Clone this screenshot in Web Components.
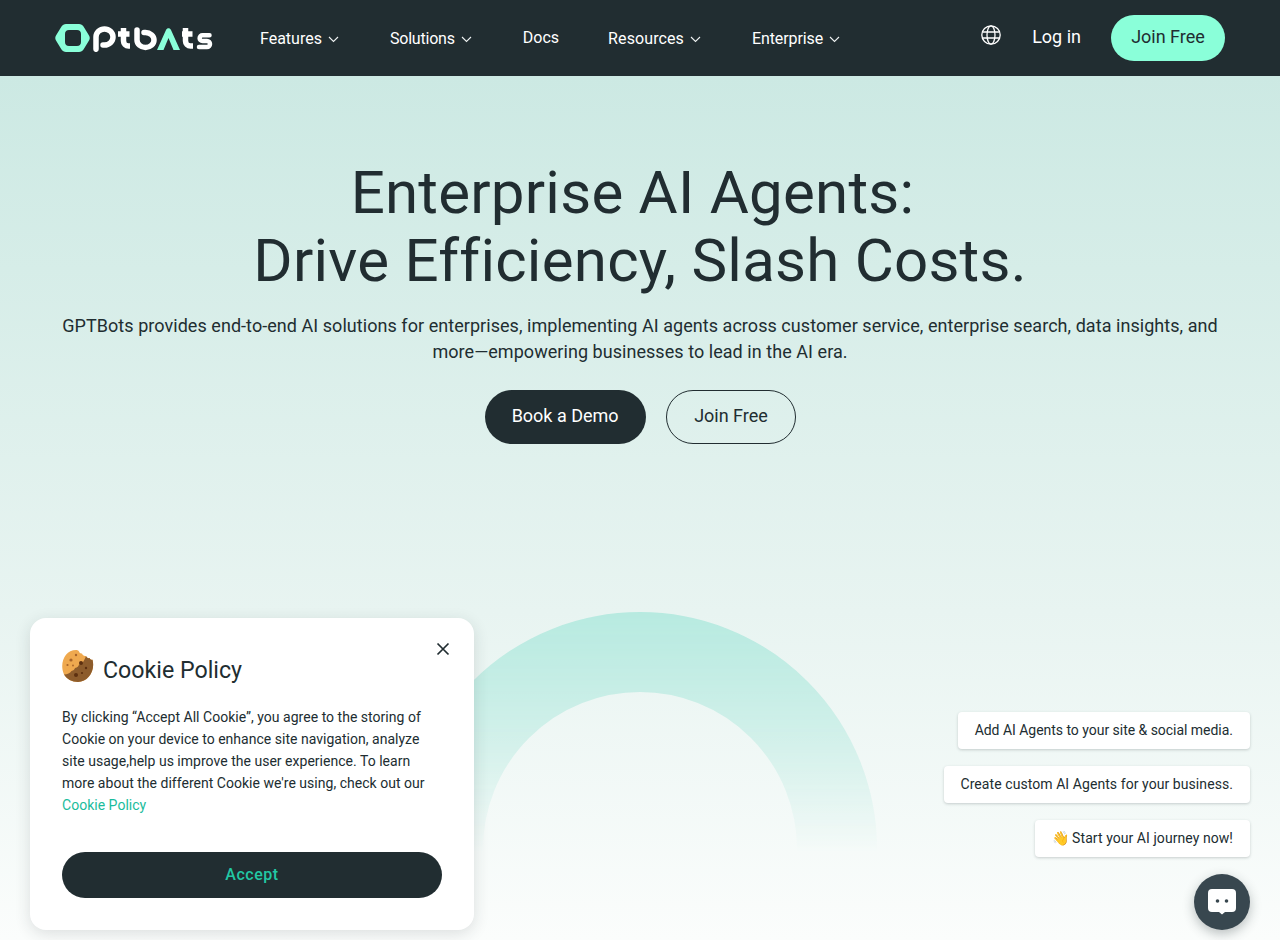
<!DOCTYPE html>
<html lang="en"><head><meta charset="utf-8"><title>GPTBots</title>
<style>
html,body{margin:0;height:940px;overflow:hidden;font-family:Roboto,"Liberation Sans",sans-serif}
body{position:relative;background:#fff}
</style></head><body>
<gb-header></gb-header>
<gb-hero></gb-hero>
<gb-cookie></gb-cookie>
<gb-chat></gb-chat>
<script>
const el=(name,html)=>customElements.define(name,class extends HTMLElement{constructor(){super();this.attachShadow({mode:'open'}).innerHTML=html}});
const chev='<svg width="11" height="7" viewBox="0 0 11 7" fill="none" stroke="currentColor" stroke-width="1.100"><path d="M1 1l4.500 4.500L10 1"/></svg>';
el('gb-nav-item',`<style>:host{display:inline-flex;align-items:center;gap:6px;font-size:16px;color:#fff;line-height:20px;height:20px}
svg{display:block;margin-top:1px;color:#eef2f2}</style><slot></slot>${chev}`);
el('gb-header',`<style>:host{display:flex;align-items:center;box-sizing:border-box;height:76px;background:#212d31;padding:0 55px;color:#fff;position:relative;z-index:2}
.logo{display:block;width:158px;height:28px;flex:none}
nav{display:flex;align-items:center;margin-left:47px;font-size:16px}
.docs{font-size:16px;margin-left:51px;line-height:20px}
gb-nav-item{margin-top:1px}
.r{margin-left:auto;display:flex;align-items:center}
.login{font-size:18px;margin-left:31px;margin-top:-3px}
.join{margin-left:30px;width:114px;height:46px;border-radius:23px;background:#8affd9;color:#212d31;font-size:18px;line-height:20px;padding-bottom:2px;box-sizing:border-box;display:flex;align-items:center;justify-content:center}
.globe{display:block;margin-top:-7px}
</style>
<svg class="logo" viewBox="0 0 158 28" role="img" aria-label="GPTBots">
<path fill="#8affd9" fill-rule="evenodd" d="M11 0H24c2 0 3.500 1 4.500 2.500L34 11.500c1 1.500 1 3.500 0 5L28.500 25.500c-1 1.500-2.500 2.500-4.500 2.500H11c-2 0-3.500-1-4.500-2.500L1 16.500c-1-1.500-1-3.500 0-5L6.500 2.500C7.500 1 9 0 11 0zM14 6c-2.500 0-4 1.500-4 4v8c0 2.500 1.500 4 4 4h8c2.500 0 4-1.500 4-4v-8c0-2.500-1.500-4-4-4z"/>
<g fill="none" stroke="#fff" stroke-width="5.500" stroke-linecap="round">
<path d="M41 25.300V13a8.500 8 0 1 1 8.500 8H48"/>
<path stroke-linecap="butt" d="M68.500 4V17a5 5 0 0 0 5 5h1.500M63 10H74.500"/>
<path d="M82 6V16a8.500 7.500 0 1 0 8.500-7.500H89"/>
<path stroke-linecap="butt" d="M130.500 4V17a5 5 0 0 0 5 5h2.500M127 10H137.500"/>
<path stroke-width="4.500" d="M154.500 11.300H147.500a2.800 2.800 0 0 0 0 5.700h4.500a3 3 0 0 1 0 6h-8"/>
</g>
<path fill="#8affd9" d="M102 26 111 6c1-2.200 4-2.200 5 0L125 26H118.500L113.500 14 108.500 26z"/>
</svg>
<nav>
<gb-nav-item>Features</gb-nav-item>
<gb-nav-item style="margin-left:51px;letter-spacing:-.2px">Solutions</gb-nav-item>
<span class="docs">Docs</span>
<gb-nav-item style="margin-left:49px;letter-spacing:.1px">Resources</gb-nav-item>
<gb-nav-item style="margin-left:51px;letter-spacing:-.1px">Enterprise</gb-nav-item>
</nav>
<div class="r">
<svg class="globe" width="20" height="20" viewBox="0 0 20 20" fill="none" stroke="#fff" stroke-width="1.300"><circle cx="10" cy="10" r="9.200"/><ellipse cx="10" cy="10" rx="4" ry="9.200"/><path d="M1.500 7h17M1.500 13h17"/></svg>
<span class="login">Log in</span>
<div class="join">Join Free</div>
</div>`);
el('gb-button',`<style>:host{display:inline-flex;align-items:center;justify-content:center;box-sizing:border-box;height:54px;border-radius:27px;font-size:18px;padding:0 27px 3px;background:#212d31;color:#fff}
:host([outline]){background:transparent;color:#212d31;border:1px solid #212d31;padding:0 27.500px 3px}</style><slot></slot>`);
el('gb-hero',`<style>:host{display:block;box-sizing:border-box;height:864px;position:relative;overflow:hidden;background:linear-gradient(180deg,#cce9e3 0%,#e8f4f1 62%,#fbfdfc 100%);padding-top:83px;text-align:center;color:#212d31}
h1{margin:0;font-weight:400;font-size:60px;line-height:68px;letter-spacing:.24px}
p{margin:18px auto 0;font-size:18px;line-height:26px;width:1180px;letter-spacing:.05px}
.b{display:flex;justify-content:center;gap:20px;margin-top:25px;padding-left:1px}
.arc{position:absolute;left:400px;top:536px;width:480px;height:240px;overflow:hidden;-webkit-mask-image:linear-gradient(180deg,#000,rgba(0,0,0,.55) 50%,transparent 100%);mask-image:linear-gradient(180deg,#000,rgba(0,0,0,.55) 50%,transparent 100%)}
.arc i{display:block;box-sizing:border-box;width:474px;height:474px;margin-left:3px;border-radius:50%;border:80px solid #b7eae0}
</style>
<h1>Enterprise AI Agents:&nbsp;<br>Drive Efficiency, Slash Costs.</h1>
<p>GPTBots provides end-to-end AI solutions for enterprises, implementing AI agents across customer service, enterprise search, data insights, and more—empowering businesses to lead in the AI era.</p>
<div class="b"><gb-button>Book a Demo</gb-button><gb-button outline>Join Free</gb-button></div>
<div class="arc"><i></i></div>`);
el('gb-cookie',`<style>:host{display:block;position:absolute;left:30px;top:618px;width:444px;height:312px;box-sizing:border-box;padding:32px;background:#fff;border-radius:16px;box-shadow:0 4px 16px rgba(33,45,50,.14);color:#212d31;z-index:3}
.t{display:flex;align-items:center;gap:9px;font-size:23.200px;height:32px;line-height:32px}
.t span{margin-top:8px}
.x{position:absolute;right:24px;top:24px}
p{margin:24px 0 0;font-size:14px;line-height:22px;height:110px;letter-spacing:.02px}
a{color:#1abc9c;text-decoration:none}
.btn{margin-top:36px;height:46px;box-sizing:border-box;padding-bottom:2px;border-radius:23px;background:#212d31;color:#22c7a4;font-size:16px;font-weight:500;letter-spacing:.55px;display:flex;align-items:center;justify-content:center}
</style>
<div class="t"><svg width="32" height="32" viewBox="0 0 32 32"><path fill="#efa94f" d="M14 0c1.500 0 2.500.5 3 1.500.5 1.500 1.500 2 3 2 .5 1.500 2 3 4 2.500.5 1.500 2 2.500 3.500 2 .5 1.300 1.500 2 3 1.800C33.500 21 26 32 16 32 10 32 4.500 29 2 24.500-3 13 3 0 14 0z"/><path fill="#8d5c2c" d="M24 6c.5 1.500 2 2.500 3.500 2 .5 1.300 1.500 2 3 1.800C33.500 21 26 32 16 32 10 32 4.500 29 2 24.500c3.500 0 6-1.500 7.500-3.500 2-.3 3-1.500 3.500-3 2.500-.5 3.500-1.500 4-3.500 3-.5 5-3 7-8.500z"/><g fill="#a8642a"><circle cx="9" cy="10" r="1.600"/><circle cx="14" cy="5" r="1.200"/><circle cx="5.500" cy="15" r="1.100"/><circle cx="11" cy="15.500" r=".9"/></g><g fill="#5d3010"><circle cx="19" cy="13" r="2"/><circle cx="24" cy="18" r="1.200"/><circle cx="14" cy="25" r="2"/><circle cx="20" cy="23" r="1.100"/></g></svg><span>Cookie Policy</span></div>
<svg class="x" width="14" height="14" viewBox="0 0 14 14" fill="none" stroke="#212d31" stroke-width="1.700"><path d="M1.500 1.500l11 11M12.500 1.500l-11 11"/></svg>
<p>By clicking “Accept All Cookie”, you agree to the storing of Cookie on your device to enhance site navigation, analyze site usage,help us improve the user experience. To learn more about the different Cookie we're using, check out our <a>Cookie Policy</a></p>
<div class="btn">Accept</div>`);
el('gb-bubble',`<style>:host{display:block;box-sizing:border-box;height:37px;line-height:36px;padding:0 17px;background:#fff;border-radius:4px;font-size:14px;color:#212d31;box-shadow:0 1px 3px rgba(33,45,50,.22);white-space:nowrap}</style><slot></slot>`);
el('gb-chat',`<style>:host{display:flex;flex-direction:column;align-items:flex-end;gap:17px;position:absolute;right:30px;top:712px;z-index:3}
.fab{width:56px;height:56px;border-radius:50%;background:#38474f;display:flex;align-items:center;justify-content:center;box-shadow:0 4px 12px rgba(33,45,50,.3)}
</style>
<gb-bubble style="letter-spacing:-.03px">Add AI Agents to your site &amp; social media.</gb-bubble>
<gb-bubble style="letter-spacing:.07px">Create custom AI Agents for your business.</gb-bubble>
<gb-bubble style="letter-spacing:.06px">👋 Start your AI journey now!</gb-bubble>
<div class="fab"><svg width="28" height="26" viewBox="0 0 28 26"><path fill="#fff" d="M4 0h20a4 4 0 0 1 4 4v15a4 4 0 0 1-4 4h-7l-3 2.500L11 23H4a4 4 0 0 1-4-4V4a4 4 0 0 1 4-4z"/><circle cx="9.500" cy="12" r="1.800" fill="#38474f"/><circle cx="18.500" cy="12" r="1.800" fill="#38474f"/></svg></div>`);
</script></body></html>
